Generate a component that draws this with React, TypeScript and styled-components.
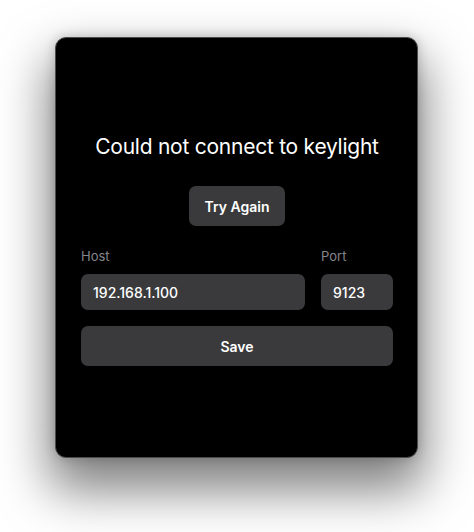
import styled, { createGlobalStyle } from "styled-components";

const GlobalStyle = createGlobalStyle`
  html, body {
    margin: 0;
    padding: 0;
    background: #ffffff;
  }
  body {
    font-family: Inter, "Noto Sans", "Liberation Sans", sans-serif;
    -webkit-font-smoothing: antialiased;
  }
`;

export default function App() {
  return (
    <>
      <GlobalStyle />
      <Page>
        <Window>
          <Title>Could not connect to keylight</Title>
          <Button>Try Again</Button>
          <Form>
            <FieldRow>
              <Field grow>
                <Label>Host</Label>
                <Input defaultValue="192.168.1.100" />
              </Field>
              <Field width={72}>
                <Label>Port</Label>
                <Input defaultValue="9123" />
              </Field>
            </FieldRow>
            <Button full>Save</Button>
          </Form>
        </Window>
      </Page>
    </>
  );
}

const Page = styled.div`
  width: 474px;
  height: 532px;
  box-sizing: border-box;
  padding: 37px 0 0 55px;
`;

const Window = styled.div`
  width: 363px;
  height: 421px;
  box-sizing: border-box;
  background: #000000;
  border: 1px solid #4c4c4e;
  border-radius: 11px;
  box-shadow: 0 26px 50px 6px rgba(0, 0, 0, 0.5),
    0 0 12px rgba(0, 0, 0, 0.2);
  padding: 95px 24px 0 25px;
  display: flex;
  flex-direction: column;
  align-items: center;
`;

const Title = styled.h1`
  margin: 0;
  font-size: 21px;
  line-height: 28px;
  font-weight: 400;
  color: #ffffff;
  letter-spacing: -0.25px;
`;

const Button = styled.button<{ full?: boolean }>`
  margin-top: ${(p) => (p.full ? "0" : "25px")};
  width: ${(p) => (p.full ? "100%" : "96px")};
  height: 40px;
  border: none;
  border-radius: 7px;
  background: #3a3a3c;
  color: #ffffff;
  font-family: inherit;
  font-size: 14px;
  font-weight: 600;
  cursor: pointer;
`;

const Form = styled.div`
  margin-top: 22px;
  width: 100%;
  display: flex;
  flex-direction: column;
  gap: 16px;
`;

const FieldRow = styled.div`
  display: flex;
  gap: 16px;
`;

const Field = styled.div<{ grow?: boolean; width?: number }>`
  display: flex;
  flex-direction: column;
  gap: 10px;
  flex: ${(p) => (p.grow ? "1" : "none")};
  width: ${(p) => (p.width ? `${p.width}px` : "auto")};
`;

const Label = styled.label`
  font-size: 13px;
  line-height: 16px;
  color: #85858c;
`;

const Input = styled.input`
  height: 36px;
  box-sizing: border-box;
  width: 100%;
  border: none;
  border-radius: 7px;
  background: #3a3a3c;
  color: #ffffff;
  padding: 0 12px;
  font-family: inherit;
  font-size: 14px;
  font-weight: 500;
  outline: none;
`;
